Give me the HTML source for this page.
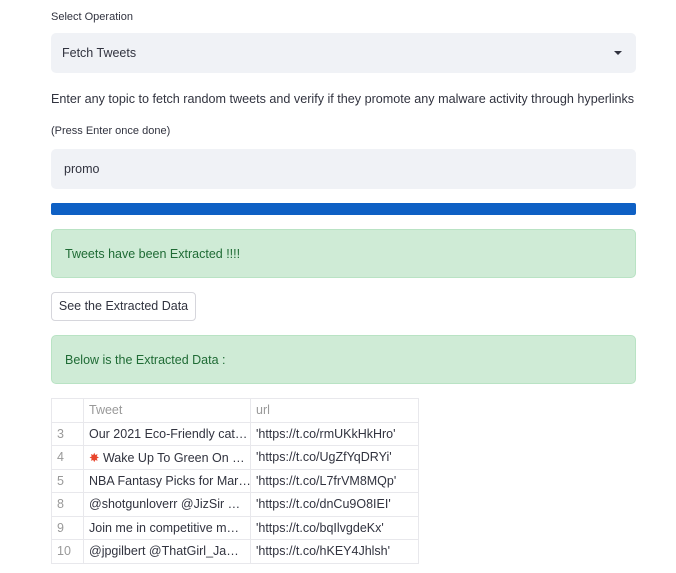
<!DOCTYPE html>
<html><head><meta charset="utf-8"><style>
body{margin:0;background:#fff;font-family:"Liberation Sans",sans-serif;color:#31333f;width:676px;height:573px;position:relative;overflow:hidden}
.a{position:absolute}
.box{position:absolute;left:51px;width:585px;border-radius:5px}
table{position:absolute;left:51px;top:398px;border-collapse:collapse;font-size:12.5px;table-layout:fixed;width:367px}
td{border:1px solid #e8e8ec;height:22.5px;padding:0 5px;white-space:nowrap;overflow:hidden;color:#31333f}
td.i{color:#999}
tr.h td{color:#999}
</style></head><body>
<div class="a" style="left:51px;top:11px;font-size:11px">Select Operation</div>
<div class="box" style="top:33px;height:40px;background:#f0f2f6"><span class="a" style="left:11px;top:13px;font-size:12.5px">Fetch Tweets</span>
<span class="a" style="right:14px;top:18px;width:0;height:0;border-left:4px solid transparent;border-right:4px solid transparent;border-top:4px solid #31333f"></span></div>
<div class="a" style="left:51px;top:92px;font-size:12.6px;white-space:nowrap">Enter any topic to fetch random tweets and verify if they promote any malware activity through hyperlinks</div>
<div class="a" style="left:51px;top:125px;font-size:11px">(Press Enter once done)</div>
<div class="box" style="top:149px;height:40px;background:#f0f2f6"><span class="a" style="left:13px;top:13px;font-size:12.5px">promo</span></div>
<div class="box" style="top:203px;height:12px;background:#0e60c4;border-radius:2px"></div>
<div class="box" style="top:229px;height:49px;background:#cfebd6;border:1px solid #b9e3c4;box-sizing:border-box"><span class="a" style="left:13px;top:17px;font-size:12.5px;color:#1f6b35">Tweets have been Extracted !!!!</span></div>
<div class="a" style="left:51px;top:292px;width:145px;height:29px;border:1px solid #d6d6dc;border-radius:4px;box-sizing:border-box;font-size:12.5px;line-height:27px;text-align:center">See the Extracted Data</div>
<div class="box" style="top:335px;height:49px;background:#cfebd6;border:1px solid #b9e3c4;box-sizing:border-box"><span class="a" style="left:13px;top:17px;font-size:12.5px;color:#1f6b35">Below is the Extracted Data :</span></div>
<table>
<colgroup><col style="width:32px"><col style="width:167px"><col style="width:168px"></colgroup>
<tr class="h"><td class="i"></td><td>Tweet</td><td>url</td></tr>
<tr><td class="i">3</td><td>Our 2021 Eco-Friendly cat…</td><td>'https://t.co/rmUKkHkHro'</td></tr>
<tr><td class="i">4</td><td><span style="color:#e8452c">✸</span> Wake Up To Green On …</td><td>'https://t.co/UgZfYqDRYi'</td></tr>
<tr><td class="i">5</td><td>NBA Fantasy Picks for Mar…</td><td>'https://t.co/L7frVM8MQp'</td></tr>
<tr><td class="i">8</td><td>@shotgunloverr @JizSir …</td><td>'https://t.co/dnCu9O8IEI'</td></tr>
<tr><td class="i">9</td><td>Join me in competitive m…</td><td>'https://t.co/bqIlvgdeKx'</td></tr>
<tr><td class="i">10</td><td>@jpgilbert @ThatGirl_Ja…</td><td>'https://t.co/hKEY4Jhlsh'</td></tr>
</table>
</body></html>
